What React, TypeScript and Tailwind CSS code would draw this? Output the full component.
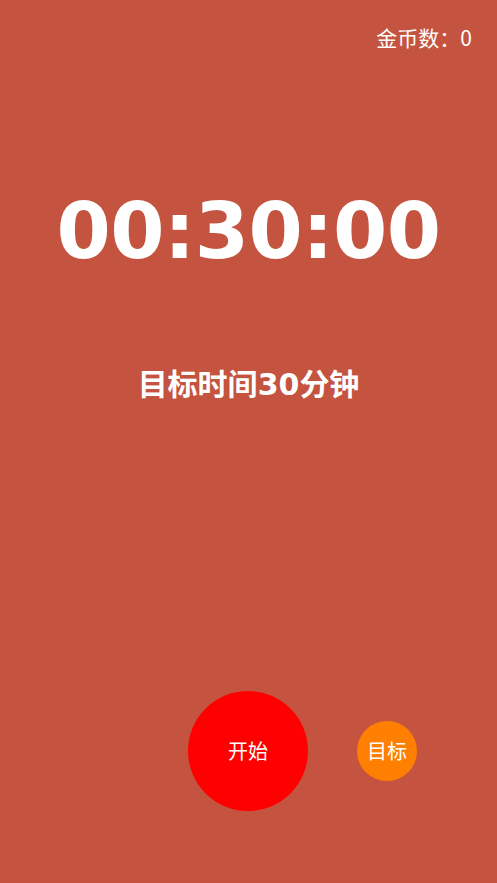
const App: React.FC = () => {
  return (
    <div
      className="relative flex h-[883px] w-full flex-col items-center overflow-hidden bg-[#c4543f] text-white"
      style={{ fontFamily: '"Noto Sans CJK SC", "Noto Sans", sans-serif' }}
    >
      <div className="flex w-full justify-end pr-[25px] pt-[24px] text-[21px] leading-[26px]">
        金币数：0
      </div>

      <div className="mt-[131px] font-['DejaVu_Sans',sans-serif] text-[78px] font-bold leading-[100px] tracking-[-0.5px]">
        00:30:00
      </div>

      <div className="mt-[83px] text-[30px] font-bold leading-[36px]">
        目标时间<span className="font-['DejaVu_Sans',sans-serif]">30</span>分钟
      </div>

      <div className="mt-auto mb-[72px] flex w-full items-center">
        <div className="ml-[188px] flex h-[120px] w-[120px] items-center justify-center rounded-full bg-[#ff0000] text-[20px]">
          开始
        </div>
        <div className="ml-[49px] flex h-[60px] w-[60px] items-center justify-center rounded-full bg-[#ff8000] text-[20px]">
          目标
        </div>
      </div>
    </div>
  );
};

export default App;
